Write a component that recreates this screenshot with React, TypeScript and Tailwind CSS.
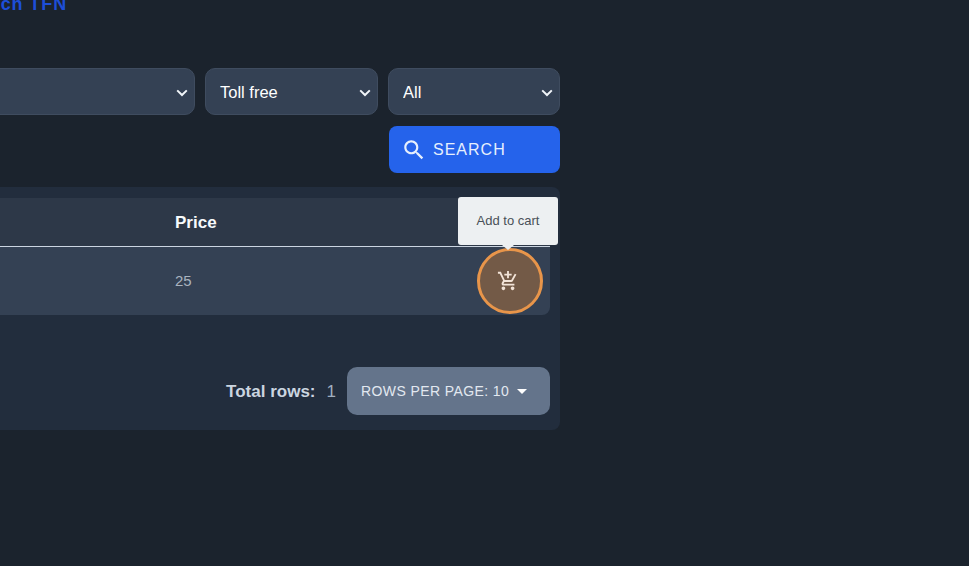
import React from 'react';

const CartIcon = () => (
  <svg width="22" height="22" viewBox="0 0 24 24" fill="currentColor" className="mr-[4px]">
    <path d="M11 9h2V6h3V4h-3V1h-2v3H8v2h3v3zm-4 9c-1.1 0-1.99.9-1.99 2S5.9 22 7 22s2-.9 2-2-.9-2-2-2zm10 0c-1.1 0-1.99.9-1.99 2s.89 2 1.99 2 2-.9 2-2-.9-2-2-2zm-9.83-3.25.03-.12.9-1.63h7.45c.75 0 1.41-.41 1.75-1.03l3.86-7.01L19.42 4h-.01l-1.1 2-2.76 5H8.53l-.13-.27L6.16 6l-.95-2-.94-2H1v2h2l3.6 7.59-1.35 2.45c-.16.28-.25.61-.25.96 0 1.1.9 2 2 2h12v-2H7.42c-.13 0-.25-.11-.25-.25z" />
  </svg>
);

const SearchIcon = () => (
  <svg width="26" height="26" viewBox="0 0 24 24" fill="currentColor">
    <path d="M15.5 14h-.79l-.28-.27C15.41 12.59 16 11.11 16 9.5 16 5.91 13.09 3 9.5 3S3 5.91 3 9.5 5.91 16 9.5 16c1.61 0 3.09-.59 4.23-1.57l.27.28v.79l5 4.99L20.49 19l-4.99-5zm-6 0C7.01 14 5 11.99 5 9.5S7.01 5 9.5 5 14 7.01 14 9.5 11.99 14 9.5 14z" />
  </svg>
);

const Select = ({ value, className = "" }: any) => (
  <div className={`relative shrink-0 ${className}`}>
    <select
      defaultValue={value}
      className="h-[47px] w-full appearance-none rounded-[10px] border border-[#3f4c5f] bg-[#344154] pt-[2px] pl-[14px] pr-8 text-[16.5px] text-white"
    >
      <option>{value}</option>
    </select>
    <svg width="12" height="8" viewBox="0 0 12 8" fill="none" stroke="#f1f5f9" strokeWidth="2" className="pointer-events-none absolute top-[21px] right-[7px]">
      <path d="M1.2 1.4 6 6l4.8-4.6" />
    </svg>
  </div>
);

export default function App() {
  return (
    <div className="h-[566px] w-[969px] overflow-hidden bg-[#1b232d] font-['Liberation_Sans',sans-serif]">
      <div className="flex w-[560px] flex-col">
        <h1 className="-mt-[6px] -ml-[42px] h-[74px] whitespace-nowrap text-[18px] leading-[20px] font-bold tracking-[0.9px] text-[#1d4ed8]">
          Search TFN
        </h1>

        <div className="flex justify-end gap-[10px]">
          <Select value="" className="w-[300px]" />
          <Select value="Toll free" className="w-[173px]" />
          <Select value="All" className="w-[172px]" />
        </div>

        <div className="mt-[11px] flex justify-end">
          <button className="flex h-[47px] w-[171px] items-center gap-[6px] rounded-[8px] bg-[#2563eb] pl-[12px] text-[16px] tracking-[1px] text-[#e6effd]">
            <SearchIcon />
            SEARCH
          </button>
        </div>

        <div className="mt-[14px] flex h-[243px] flex-col rounded-r-[8px] bg-[#222d3d] pt-[11px] pr-[10px]">
          <div className="flex h-[49px] shrink-0 items-center border-b border-[#cbd5e1] bg-[#2d3848] pt-[1px] pl-[175px] text-[17px] font-bold text-[#f7fafc]">
            Price
          </div>
          <div className="relative flex h-[68px] shrink-0 items-center rounded-br-[8px] bg-[#344154] pl-[175px] text-[15px] text-[#a9b3bf]">
            25
            <button className="absolute top-[1px] right-[7px] flex h-[66px] w-[66px] items-center justify-center rounded-full border-[3px] border-[#e8954a] bg-[#735a47] text-[#f3e4d8]">
              <CartIcon />
            </button>
            <div className="absolute -top-[50px] -right-[8px] flex h-[48px] w-[100px] items-center justify-center rounded-[3px] bg-[#edf0f2] text-[13px] text-[#4a5058]">
              Add to cart
              <span className="absolute -bottom-[5px] left-1/2 h-0 w-0 -translate-x-1/2 border-x-[6px] border-t-[5px] border-x-transparent border-t-[#edf0f2]" />
            </div>
          </div>

          <div className="mt-[52px] flex items-center justify-end gap-[11px]">
            <div className="pt-[1px] text-[17px] text-[#cbd5e0]">
              <span className="font-bold">Total rows:</span>
              <span className="ml-[11px] text-[#a0aec0]">1</span>
            </div>
            <button className="flex h-[48px] w-[203px] items-center rounded-[10px] bg-[#64748b] pl-[14px] text-[14px] tracking-[0.4px] text-[#e2e8f0]">
              ROWS PER PAGE: 10
              <svg width="24" height="24" viewBox="0 0 24 24" fill="currentColor" className="ml-[1px] text-white">
                <path d="M7 10l5 5 5-5z" />
              </svg>
            </button>
          </div>
        </div>
      </div>
    </div>
  );
}
